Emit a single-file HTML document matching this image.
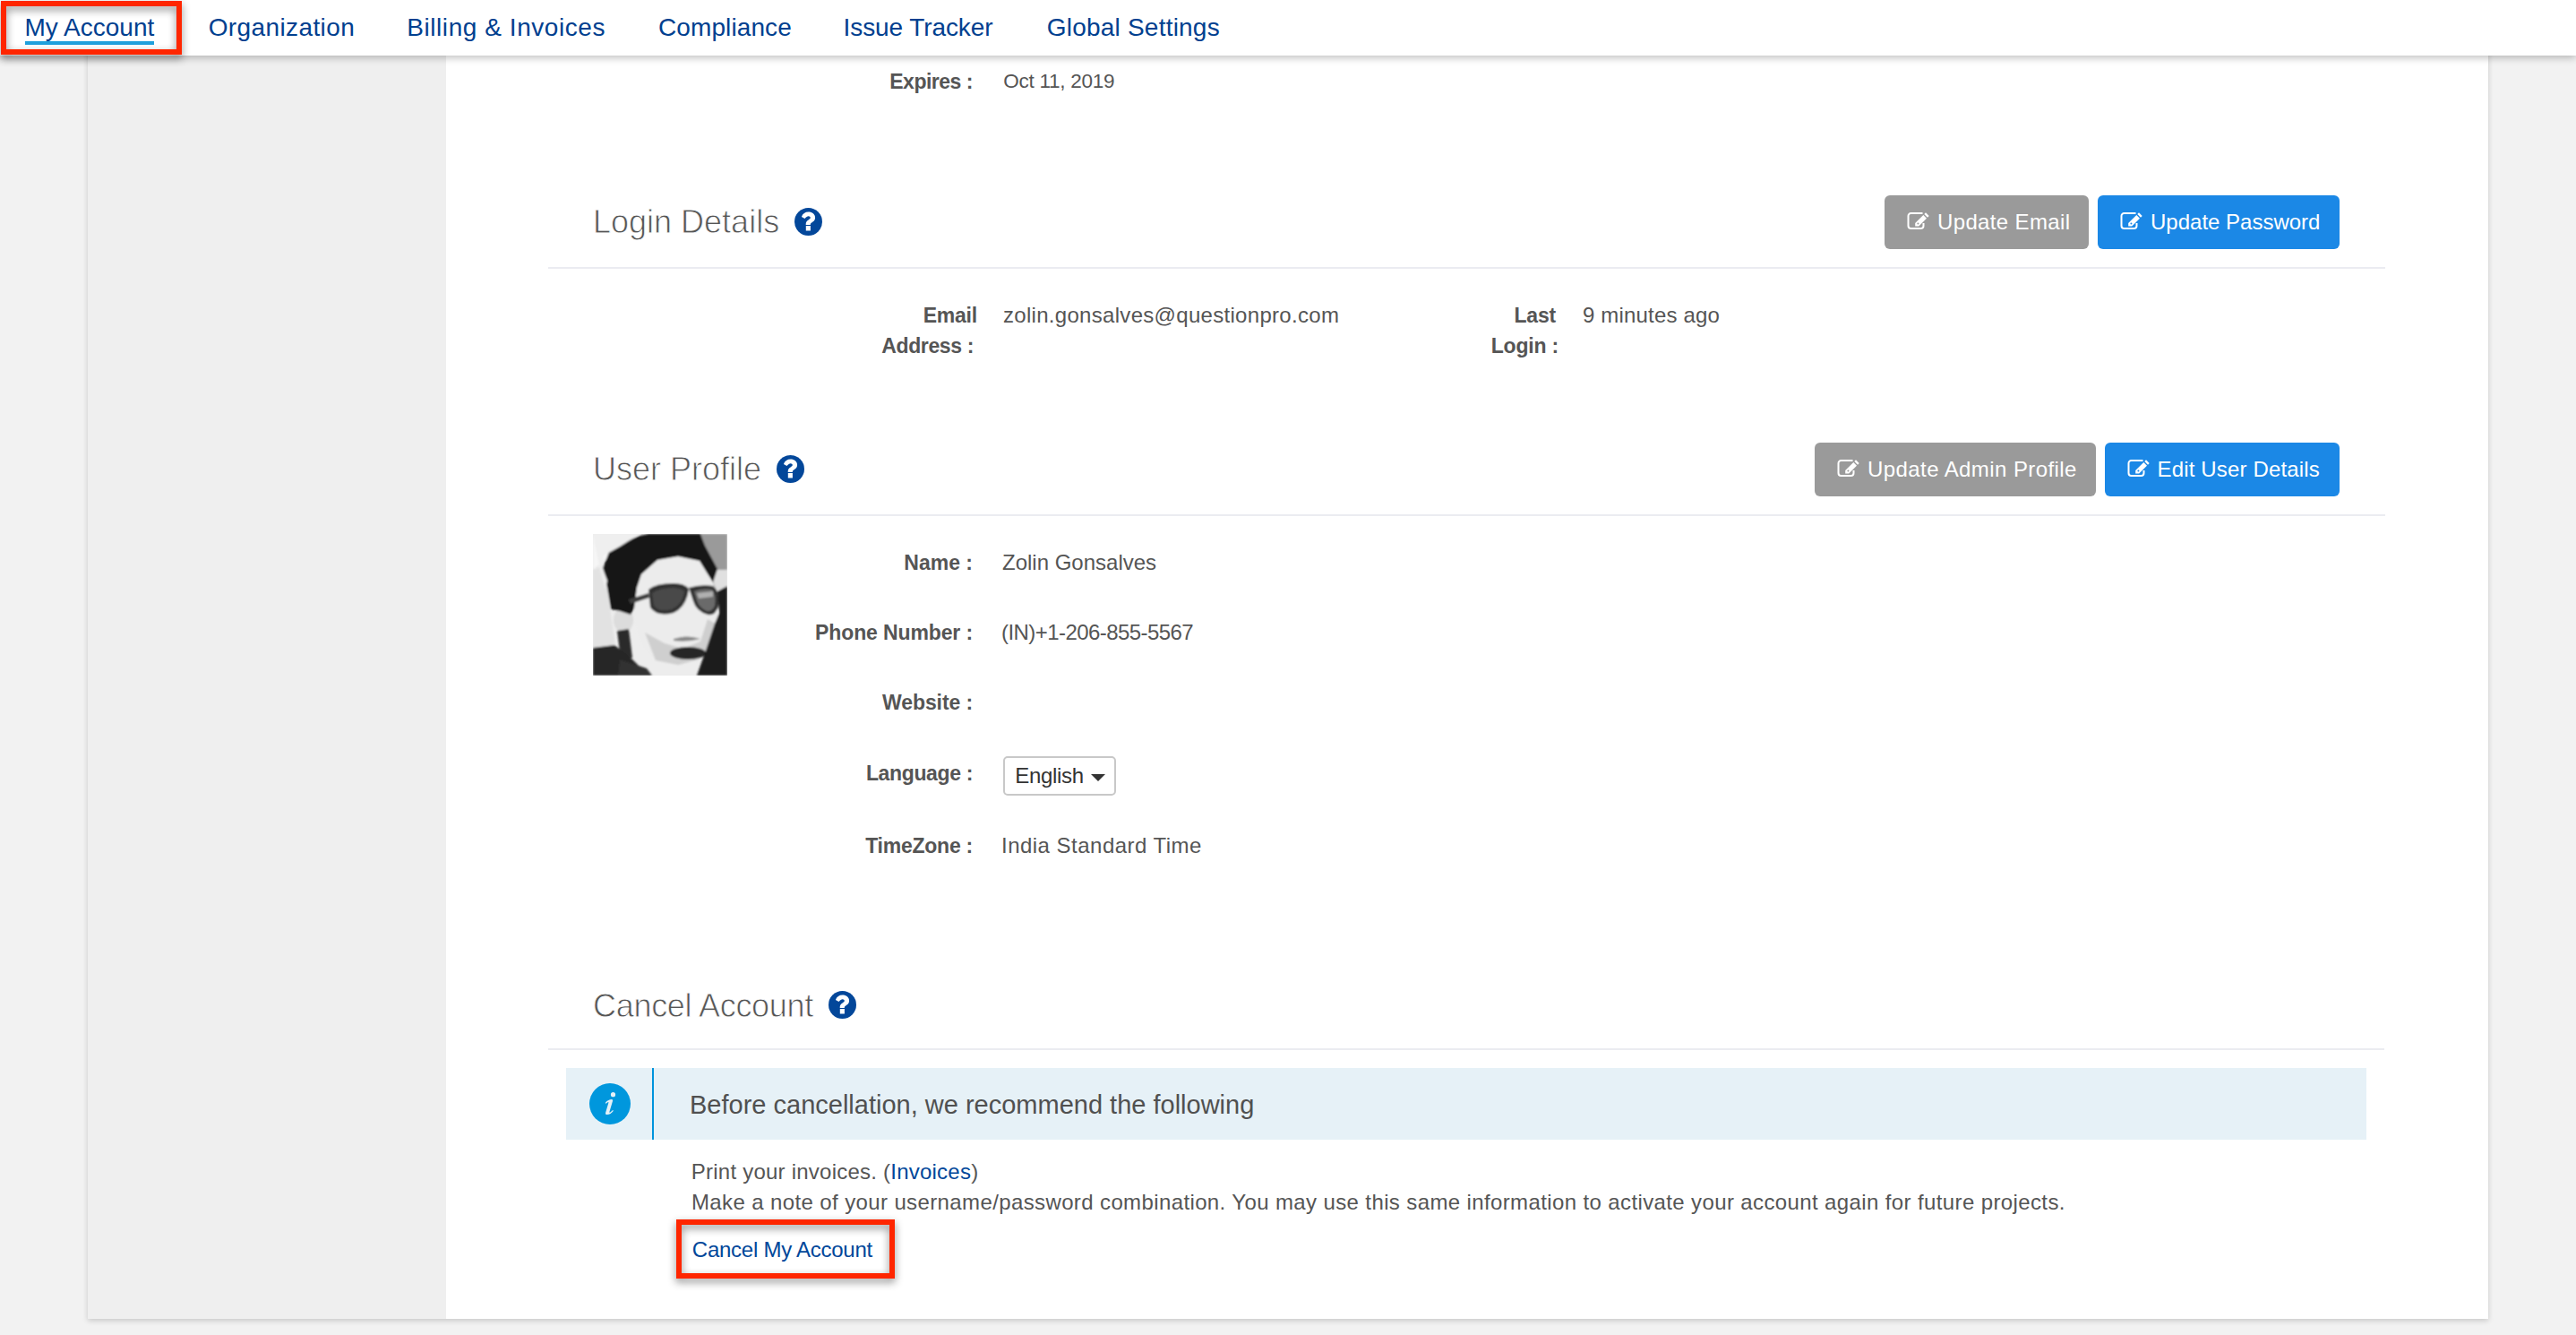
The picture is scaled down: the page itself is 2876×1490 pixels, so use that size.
<!DOCTYPE html>
<html><head><meta charset="utf-8">
<style>
*{margin:0;padding:0;box-sizing:border-box}
html,body{width:2876px;height:1490px;overflow:hidden;background:#f2f2f2;font-family:"Liberation Sans",sans-serif;color:#555}
.abs{position:absolute;white-space:nowrap}
#container{position:absolute;left:98px;top:-20px;width:2680px;height:1492px;background:#fff;box-shadow:0 2px 6px rgba(0,0,0,.18)}
#sidebar{position:absolute;left:98px;top:0;width:400px;height:1472px;background:#efefef}
#header{position:absolute;left:0;top:0;width:2876px;height:62px;background:#fff;box-shadow:0 2px 9px rgba(0,0,0,.28)}
.nav{position:absolute;top:0;font-size:28px;line-height:62px;color:#00408f;white-space:nowrap}
.uline{position:absolute;left:28px;top:46px;width:144px;height:4px;background:#1ea0dc}
.h{font-size:36px;line-height:40px;color:#555;-webkit-text-stroke:.8px #fff}
.lbl{font-weight:bold;font-size:23px;line-height:34px;text-align:right;color:#555;letter-spacing:-.1px}
.val{font-size:24px;line-height:34px;color:#555}
.q{position:absolute;width:31px;height:31px}
.sep{position:absolute;left:612px;width:2051px;height:2px;background:#ebecf1}
.btn{position:absolute;height:60px;border-radius:6px;color:#fff;font-size:24px;line-height:60px;white-space:nowrap}
.gray{background:#9a9a9a}
.blue{background:#1b88e6}
.btn svg{position:absolute;top:19px;width:26px;height:20px;overflow:visible}
.red{position:absolute;border:6px solid #ff2600;filter:drop-shadow(0 4px 5px rgba(0,0,0,.45))}
</style></head>
<body>
<div id="container"></div>
<div id="sidebar"></div>

<!-- Expires row -->
<div class="abs lbl" style="right:1790px;top:73.5px;letter-spacing:-.49px">Expires :</div>
<div class="abs val" style="left:1120.3px;top:73.5px;font-size:22.5px;letter-spacing:-.27px">Oct 11, 2019</div>

<!-- Login Details -->
<div class="abs h" style="left:662px;top:227.5px;letter-spacing:0px">Login Details</div>
<svg class="q" style="left:887px;top:232px" viewBox="0 0 31 31"><circle cx="15.5" cy="15.5" r="15.5" fill="#03479a"/><path d="M7.9 9.9C9.2 6.6 12 4.6 15.6 4.6 19.8 4.6 23.1 7.2 23.1 11 23.1 14 21 15.3 19.2 16.4 18.2 17 17.8 17.6 17.8 18.5V19H12.7V18C12.7 15.5 14 14.4 15.6 13.4 16.8 12.6 17.8 12.2 17.8 11.1 17.8 10 16.8 9.3 15.6 9.3 14.3 9.3 13.2 10.2 11.5 12.1Z M12.8 20.1H17.9V25.5H12.8Z" fill="#fff"/></svg>

<div class="btn gray" style="left:2104px;top:218px;width:228px"><svg style="left:24px" viewBox="0 0 26 20"><path d="M18.5 1H5.5A3 3 0 0 0 2.5 4V15A3 3 0 0 0 5.5 18H16.5A3 3 0 0 0 19.5 15V12" fill="none" stroke="#fff" stroke-width="2"/><path d="M19.3 3L23 6.7 14.2 15.5H10.2V11.9z M12.4 12.6a1 1 0 1 0 2 0a1 1 0 1 0-2 0z" fill="#fff" fill-rule="evenodd"/><path d="M20.3 2L22 .3 25.7 4 24 5.7z" fill="#fff"/></svg><span class="abs" style="left:59px;letter-spacing:.36px">Update Email</span></div>
<div class="btn blue" style="left:2342px;top:218px;width:270px"><svg style="left:24px" viewBox="0 0 26 20"><path d="M18.5 1H5.5A3 3 0 0 0 2.5 4V15A3 3 0 0 0 5.5 18H16.5A3 3 0 0 0 19.5 15V12" fill="none" stroke="#fff" stroke-width="2"/><path d="M19.3 3L23 6.7 14.2 15.5H10.2V11.9z M12.4 12.6a1 1 0 1 0 2 0a1 1 0 1 0-2 0z" fill="#fff" fill-rule="evenodd"/><path d="M20.3 2L22 .3 25.7 4 24 5.7z" fill="#fff"/></svg><span class="abs" style="left:59px">Update Password</span></div>
<div class="sep" style="top:298px"></div>

<!-- Email / Last login -->
<div class="abs lbl" style="right:1785px;top:335px;letter-spacing:-.2px">Email</div><div class="abs lbl" style="right:1789px;top:369px;letter-spacing:-.37px">Address :</div>
<div class="abs val" style="left:1120px;top:335px;letter-spacing:.3px">zolin.gonsalves@questionpro.com</div>
<div class="abs lbl" style="right:1139px;top:335px;letter-spacing:-.2px">Last</div><div class="abs lbl" style="right:1136px;top:369px;letter-spacing:-.2px">Login :</div>
<div class="abs val" style="left:1767px;top:335px;letter-spacing:.17px">9 minutes ago</div>

<!-- User Profile -->
<div class="abs h" style="left:662px;top:503.5px;letter-spacing:0px">User Profile</div>
<svg class="q" style="left:867px;top:508px" viewBox="0 0 31 31"><circle cx="15.5" cy="15.5" r="15.5" fill="#03479a"/><path d="M7.9 9.9C9.2 6.6 12 4.6 15.6 4.6 19.8 4.6 23.1 7.2 23.1 11 23.1 14 21 15.3 19.2 16.4 18.2 17 17.8 17.6 17.8 18.5V19H12.7V18C12.7 15.5 14 14.4 15.6 13.4 16.8 12.6 17.8 12.2 17.8 11.1 17.8 10 16.8 9.3 15.6 9.3 14.3 9.3 13.2 10.2 11.5 12.1Z M12.8 20.1H17.9V25.5H12.8Z" fill="#fff"/></svg>
<div class="btn gray" style="left:2026px;top:494px;width:314px"><svg style="left:24px" viewBox="0 0 26 20"><path d="M18.5 1H5.5A3 3 0 0 0 2.5 4V15A3 3 0 0 0 5.5 18H16.5A3 3 0 0 0 19.5 15V12" fill="none" stroke="#fff" stroke-width="2"/><path d="M19.3 3L23 6.7 14.2 15.5H10.2V11.9z M12.4 12.6a1 1 0 1 0 2 0a1 1 0 1 0-2 0z" fill="#fff" fill-rule="evenodd"/><path d="M20.3 2L22 .3 25.7 4 24 5.7z" fill="#fff"/></svg><span class="abs" style="left:59px;letter-spacing:.42px">Update Admin Profile</span></div>
<div class="btn blue" style="left:2350px;top:494px;width:262px"><svg style="left:24px" viewBox="0 0 26 20"><path d="M18.5 1H5.5A3 3 0 0 0 2.5 4V15A3 3 0 0 0 5.5 18H16.5A3 3 0 0 0 19.5 15V12" fill="none" stroke="#fff" stroke-width="2"/><path d="M19.3 3L23 6.7 14.2 15.5H10.2V11.9z M12.4 12.6a1 1 0 1 0 2 0a1 1 0 1 0-2 0z" fill="#fff" fill-rule="evenodd"/><path d="M20.3 2L22 .3 25.7 4 24 5.7z" fill="#fff"/></svg><span class="abs" style="left:58.5px;letter-spacing:.16px">Edit User Details</span></div>
<div class="sep" style="top:574px"></div>

<!-- photo placeholder -->
<svg class="abs" style="left:662px;top:596px" width="150" height="158" viewBox="0 0 150 158">
<defs><filter id="bl" x="-10%" y="-10%" width="120%" height="120%"><feGaussianBlur stdDeviation="1.2"/></filter></defs>
<rect width="150" height="158" fill="#ededed"/>
<g filter="url(#bl)">
<path d="M0 0H40V20L10 30 0 40z" fill="#f6f6f6"/>
<path d="M0 40L12 35 20 90 25 125 0 128z" fill="#e2e2e2"/>
<path d="M110 0H150V60L136 62 126 20z" fill="#9a9a9a"/>
<path d="M130 40H150V60L138 64z" fill="#e0e0e0"/>
<path d="M54 45L72 29 95 25 119 30 127 43 136 60 140 95 131 125 118 140 95 146 70 141 56 126 48 105 46 83 49 60z" fill="#ececec"/>
<path d="M58 110L70 141 95 146 118 140 131 125 137 100 128 95 120 120 100 128 80 122z" fill="#cfcfcf"/>
<ellipse cx="34" cy="96" rx="11" ry="14" fill="#dcdcdc"/>
<path d="M27 108L40 106 44 138 31 140z" fill="#2a2a2a"/>
<path d="M11 38L20 15 35 9 52 2 62 0 120 0 125 13 139 39 134 54 127 43 119 30 95 25 72 29 54 45 49 60 46 83 42 90 30 86 20 84 16 60z" fill="#161616"/>
<path d="M0 0H52L30 14 12 24 10 36 16 52 14 62 8 40z" fill="#efefef"/><path d="M40 73L62 66 63 71 42 78z" fill="#3c3c3c"/>
<path d="M62 62Q70 55 90 55 106 56 107 62 104 82 90 88 72 93 64 82 60 72z" fill="#303030"/>
<path d="M66 66Q74 60 90 60 102 61 102 65 99 80 88 84 74 88 68 80z" fill="#4a4a4a"/>
<path d="M107 60Q120 56 134 58 142 64 140 80 137 92 128 90 115 86 112 75z" fill="#333"/>
<path d="M113 64Q122 60 133 62 138 68 136 80 133 87 127 86 118 82 116 74z" fill="#6a6a6a"/>
<path d="M116 66L134 64 134 70 118 72z" fill="#b0b0b0"/>
<path d="M90 117Q105 112 120 117 105 121 90 119z" fill="#888"/>
<ellipse cx="106" cy="133" rx="20" ry="7" fill="#262626"/>
<path d="M139 64L150 58V158H116L126 130 136 100 141 88z" fill="#1c1c1c"/>
<path d="M0 127L24 124 42 138 62 158H0z" fill="#252525"/>
<path d="M30 140L60 150 66 158H28z" fill="#333"/>
</g>
</svg>

<div class="abs lbl" style="right:1790px;top:611px;letter-spacing:0">Name :</div>
<div class="abs val" style="left:1119px;top:611px">Zolin Gonsalves</div>
<div class="abs lbl" style="right:1790px;top:689px;letter-spacing:-.12px">Phone Number :</div>
<div class="abs val" style="left:1118px;top:689px;letter-spacing:-.56px">(IN)+1-206-855-5567</div>
<div class="abs lbl" style="right:1790px;top:767px;letter-spacing:-.1px">Website :</div>
<div class="abs lbl" style="right:1790px;top:846px;letter-spacing:-.36px">Language :</div>
<div class="abs" style="left:1120px;top:844px;width:126px;height:44px;border:2px solid #c8c8c8;border-radius:5px;background:#fff"><span class="abs" style="left:11.3px;top:2.5px;font-size:24px;line-height:34px;color:#333;letter-spacing:-.33px">English</span><svg class="abs" style="left:96px;top:18px" width="16" height="9" viewBox="0 0 16 9"><path d="M0 0h16L8 8z" fill="#333"/></svg></div>
<div class="abs lbl" style="right:1790px;top:927px;letter-spacing:-.25px">TimeZone :</div>
<div class="abs val" style="left:1118px;top:927px;letter-spacing:.48px">India Standard Time</div>

<!-- Cancel account -->
<div class="abs h" style="left:662px;top:1102.5px;letter-spacing:-.3px">Cancel Account</div>
<svg class="q" style="left:925px;top:1106px" viewBox="0 0 31 31"><circle cx="15.5" cy="15.5" r="15.5" fill="#03479a"/><path d="M7.9 9.9C9.2 6.6 12 4.6 15.6 4.6 19.8 4.6 23.1 7.2 23.1 11 23.1 14 21 15.3 19.2 16.4 18.2 17 17.8 17.6 17.8 18.5V19H12.7V18C12.7 15.5 14 14.4 15.6 13.4 16.8 12.6 17.8 12.2 17.8 11.1 17.8 10 16.8 9.3 15.6 9.3 14.3 9.3 13.2 10.2 11.5 12.1Z M12.8 20.1H17.9V25.5H12.8Z" fill="#fff"/></svg>
<div class="sep" style="top:1170px;width:2050px"></div>

<div class="abs" style="left:632px;top:1192px;width:2010px;height:80px;background:#e6f1f7"></div>
<div class="abs" style="left:728px;top:1192px;width:2px;height:80px;background:#0094dc"></div>
<svg class="abs" style="left:658px;top:1209px" width="46" height="46" viewBox="0 0 46 46"><circle cx="23" cy="23" r="23" fill="#0097dd"/><circle cx="26.5" cy="12.7" r="2.6" fill="#e6f1f7"/><path d="M18 21.5c2-2 4.5-3.4 6.8-3.4 1.2 0 1.5.9 1.2 2l-3.6 11.8c-.2.8.3 1 .9.6 1-.6 2-1.6 2.8-2.5l.8.7c-2 2.5-4.5 4.4-7 4.4-1.7 0-2.2-1.1-1.7-2.7l3.2-10.6c.2-.7-.2-.9-.8-.5-.8.5-1.6 1.2-2.2 1.8z" fill="#e6f1f7"/></svg>
<div class="abs" style="left:770px;top:1216px;font-size:29px;line-height:34px;color:#505050">Before cancellation, we recommend the following</div>

<div class="abs val" style="left:771.8px;top:1291px;letter-spacing:.23px">Print your invoices. (<span style="color:#00479a">Invoices</span>)</div>
<div class="abs val" style="left:772px;top:1325px;letter-spacing:.38px">Make a note of your username/password combination. You may use this same information to activate your account again for future projects.</div>
<div class="abs val" style="left:772.8px;top:1378px;color:#00479a;letter-spacing:-.25px">Cancel My Account</div>
<div class="red" style="left:755px;top:1361px;width:244px;height:66px"></div>

<!-- Header -->
<div id="header">
<div class="nav" style="left:27.5px">My Account</div>
<div class="uline"></div>
<div class="nav" style="left:232.7px;letter-spacing:.39px">Organization</div>
<div class="nav" style="left:454.3px;letter-spacing:.56px">Billing &amp; Invoices</div>
<div class="nav" style="left:735px;letter-spacing:.1px">Compliance</div>
<div class="nav" style="left:941.6px;letter-spacing:-.09px">Issue Tracker</div>
<div class="nav" style="left:1168.8px;letter-spacing:.21px">Global Settings</div>
</div>
<div class="red" style="left:1px;top:1px;width:202px;height:60px"></div>
</body></html>
